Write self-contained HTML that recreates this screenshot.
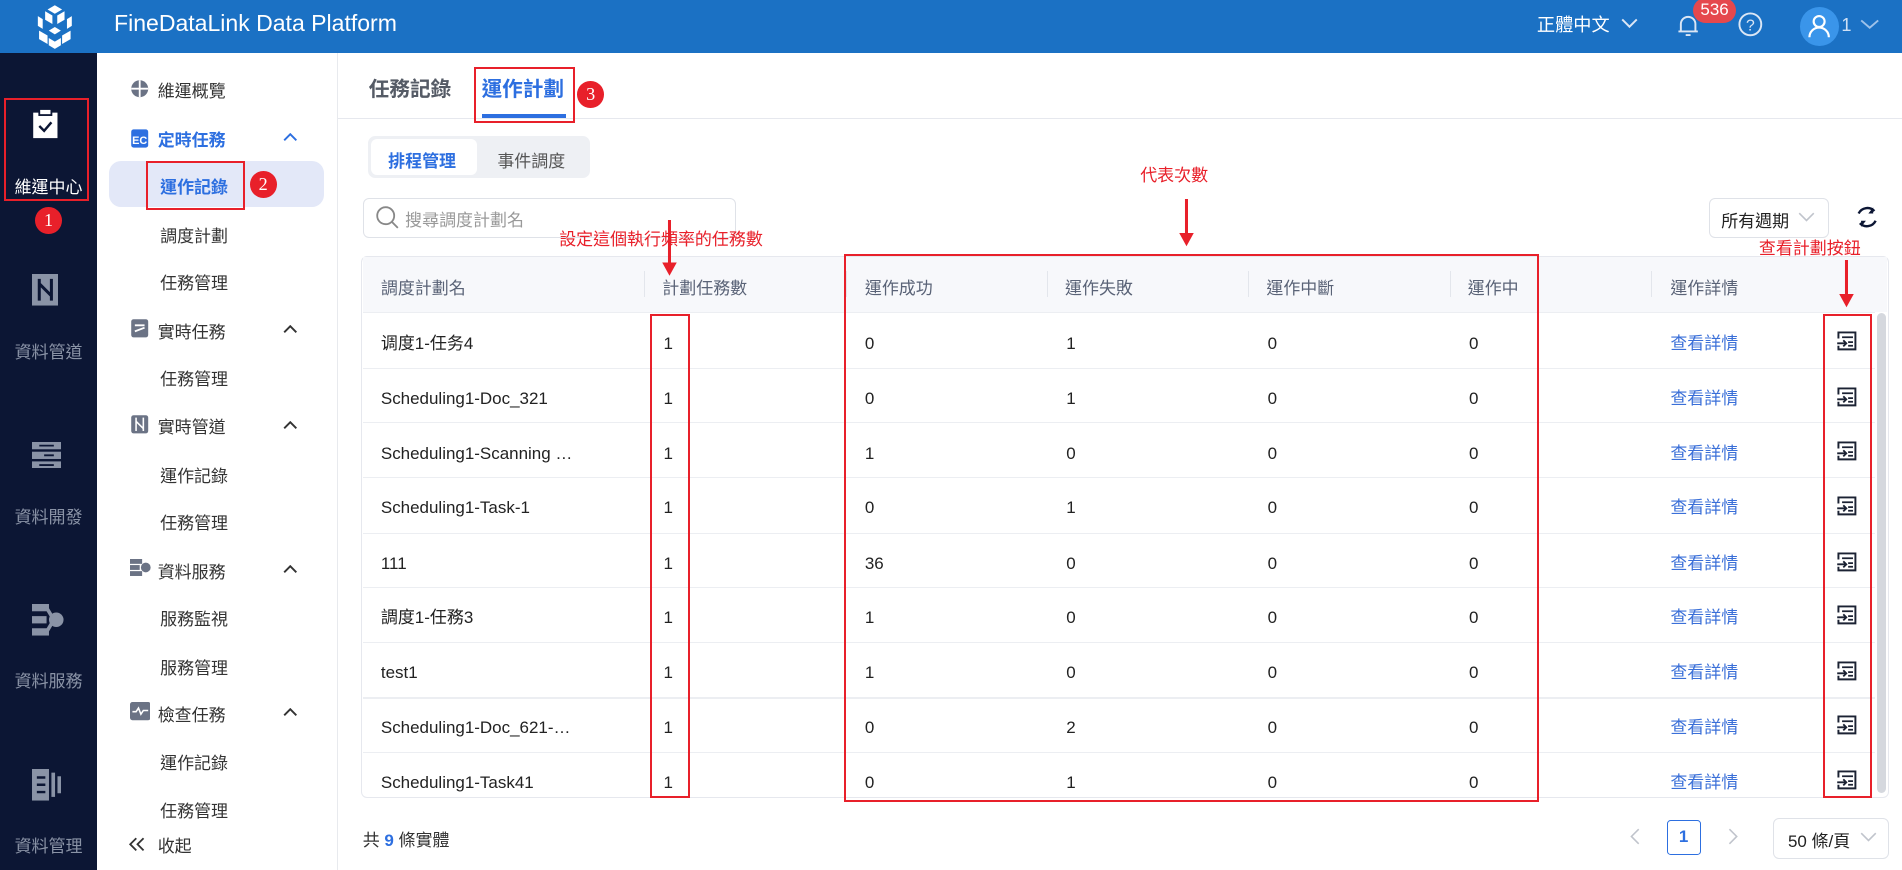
<!DOCTYPE html>
<html><head><meta charset="utf-8"><style>
html,body{margin:0;padding:0;}
body{width:1568px;height:717px;zoom:1.21301;overflow:hidden;position:relative;background:#fff;font-family:"Liberation Sans","Noto Sans CJK TC",sans-serif;color:#333;}
.a{position:absolute;white-space:nowrap;line-height:26px;}
.hdr{left:0;top:0;width:1568px;height:44px;background:#1b71c4;}
.side{left:0;top:44px;width:80px;height:673px;background:#0c1634;}
.sl{color:#8a93a6;font-size:14px;width:80px;text-align:center;}
.nav{left:81px;top:44px;width:197px;height:673px;background:#fff;border-right:1px solid #e8eaee;}
.ni{font-size:14px;color:#333;}
.red{border:2px solid #e8202a;box-sizing:border-box;}
.circ{width:22px;height:22px;border-radius:50%;background:#e8202a;color:#fff;font-family:"Liberation Serif",serif;font-size:15px;text-align:center;line-height:22px;}
.th{font-size:14px;color:#5a6377;top:225px;}
.td{font-size:14px;color:#222;}
.lk{font-size:14px;color:#3a6fd8;}
.rt{color:#e8202a;font-size:14px;}
.sep{width:1px;height:22px;background:#e3e6ec;top:223px;}
.rl{left:299px;width:1247px;height:1px;background:#eceef2;}
</style></head><body>
<div class="a hdr"></div>
<svg class="a" style="left:27px;top:3px" width="36" height="38" viewBox="0 0 36 38"><g fill="#fff"><path d="M18 1l6 3.5-6 3.5-6-3.5z"/><path d="M10 6l6 3.5v7l-6-3.5z"/><path d="M26 6l-6 3.5v7l6-3.5z"/><path d="M4 10l4 2.5v8L4 18z"/><path d="M32 10l-4 2.5v8l4-2.5z"/><path d="M5 22l7 4v7l-7-4z"/><path d="M31 22l-7 4v7l7-4z"/><path d="M18 19l5 3-5 3-5-3z"/><path d="M13 28l5 3 5-3v6l-5 3-5-3z"/></g></svg>
<div class="a" style="left:94px;top:7px;color:#fff;font-size:19px">FineDataLink Data Platform</div>
<div class="a" style="left:1267px;top:8px;color:#fff;font-size:15px">正體中文</div>
<svg class="a" style="left:1336px;top:14px" width="14" height="10"><path d="M1 2l6 6 6-6" stroke="#dbe6f5" stroke-width="1.6" fill="none"/></svg>
<svg class="a" style="left:1382px;top:10px" width="20" height="22"><path d="M4 16V10a6 6 0 0 1 12 0v6h2H2zM8 19h4" stroke="#dbe6f5" stroke-width="1.6" fill="none"/></svg>
<div class="a" style="left:1396px;top:-2px;width:35px;height:21px;border-radius:11px;background:#e5484d;color:#fff;font-size:14px;text-align:center;line-height:20px">536</div>
<svg class="a" style="left:1432px;top:9px" width="22" height="22"><circle cx="11" cy="11" r="9" stroke="#dbe6f5" stroke-width="1.6" fill="none"/><text x="11" y="16" font-size="13" fill="#dbe6f5" text-anchor="middle" font-family="Liberation Sans">?</text></svg>
<div class="a" style="left:1484px;top:6px;width:32px;height:32px;border-radius:50%;background:#3a95ea"></div>
<svg class="a" style="left:1490px;top:11px" width="20" height="22"><circle cx="10" cy="7" r="4.5" stroke="#fff" stroke-width="1.8" fill="none"/><path d="M2 20a8 8 0 0 1 16 0" stroke="#fff" stroke-width="1.8" fill="none"/></svg>
<div class="a" style="left:1518px;top:8px;color:#cfe0f5;font-size:15px">1</div>
<svg class="a" style="left:1533px;top:15px" width="16" height="10"><path d="M1 2l7 6 7-6" stroke="#9ec2ea" stroke-width="1.6" fill="none"/></svg>

<div class="a side"></div>
<svg class="a" style="left:26px;top:90px" width="22" height="25"><rect x="1" y="3" width="20" height="21" fill="#fff"/><rect x="6" y="0" width="10" height="5" fill="#fff" stroke="#0c1634" stroke-width="1.5"/><path d="M6 14l4 4 6-7" stroke="#0c1634" stroke-width="2" fill="none"/></svg>
<div class="a sl" style="left:0;top:142px;color:#fff">維運中心</div>
<svg class="a" style="left:26px;top:226px" width="22" height="26"><rect x="0" y="0" width="22" height="26" fill="#8a93a6"/><path d="M6 4v18M16 4v18M6 8l10 10" stroke="#0c1634" stroke-width="2.5"/></svg>
<div class="a sl" style="left:0;top:278px">資料管道</div>
<svg class="a" style="left:26px;top:364px" width="24" height="22"><rect x="0" y="0" width="24" height="6" fill="#8a93a6"/><rect x="0" y="8" width="24" height="6" fill="#8a93a6"/><rect x="0" y="16" width="24" height="6" fill="#8a93a6"/><path d="M6 3h12M10 11h8M6 19h12" stroke="#0c1634" stroke-width="1.5"/></svg>
<div class="a sl" style="left:0;top:414px">資料開發</div>
<svg class="a" style="left:26px;top:498px" width="28" height="26"><rect x="0" y="0" width="14" height="6" fill="#8a93a6"/><rect x="0" y="10" width="12" height="6" fill="#8a93a6"/><rect x="0" y="20" width="14" height="6" fill="#8a93a6"/><circle cx="20" cy="13" r="6" fill="#8a93a6"/><path d="M12 3l6 10-6 10" stroke="#8a93a6" stroke-width="3" fill="none"/></svg>
<div class="a sl" style="left:0;top:549px">資料服務</div>
<svg class="a" style="left:26px;top:634px" width="24" height="26"><rect x="0" y="0" width="14" height="26" fill="#8a93a6"/><path d="M4 7h7M4 13h7M4 19h7" stroke="#0c1634" stroke-width="2"/><rect x="16" y="3" width="3" height="20" fill="#8a93a6"/><rect x="21" y="6" width="3" height="14" fill="#8a93a6"/></svg>
<div class="a sl" style="left:0;top:685px">資料管理</div>

<div class="a nav"></div>
<div class="a" style="left:90px;top:133px;width:177px;height:38px;border-radius:10px;background:#e3e8f8"></div>
<svg class="a" style="left:107px;top:65px" width="16" height="16"><circle cx="8" cy="8" r="7" fill="#6b7385"/><path d="M8 1v14M1 8h14" stroke="#fff" stroke-width="1.5"/></svg>
<div class="a ni" style="left:130px;top:63px">維運概覽</div>
<svg class="a" style="left:107px;top:105px" width="16" height="17"><rect x="1" y="2" width="14" height="15" rx="2" fill="#2d6fe0"/><text x="8" y="14" font-size="9" fill="#fff" text-anchor="middle" font-family="Liberation Sans" font-weight="bold">EC</text></svg>
<div class="a ni" style="left:130px;top:103px;color:#2d6fe0;font-weight:bold">定時任務</div>
<div class="a ni" style="left:132px;top:142px;color:#2d6fe0;font-weight:bold">運作記錄</div>
<div class="a ni" style="left:132px;top:182px">調度計劃</div>
<div class="a ni" style="left:132px;top:221px">任務管理</div>
<svg class="a" style="left:107px;top:262px" width="16" height="17"><rect x="1" y="1" width="14" height="15" rx="2" fill="#6b7385"/><path d="M4 6h8M4 11l8-3" stroke="#fff" stroke-width="1.5"/></svg>
<div class="a ni" style="left:130px;top:261px">實時任務</div>
<div class="a ni" style="left:132px;top:300px">任務管理</div>
<svg class="a" style="left:107px;top:341px" width="16" height="17"><rect x="1" y="1" width="14" height="15" rx="2" fill="#6b7385"/><path d="M5 3v11M11 3v11M5 6l6 6" stroke="#fff" stroke-width="1.3"/></svg>
<div class="a ni" style="left:130px;top:340px">實時管道</div>
<div class="a ni" style="left:132px;top:380px">運作記錄</div>
<div class="a ni" style="left:132px;top:419px">任務管理</div>
<svg class="a" style="left:107px;top:461px" width="18" height="14"><rect x="0" y="0" width="10" height="4" fill="#6b7385"/><rect x="0" y="5" width="8" height="4" fill="#6b7385"/><rect x="0" y="10" width="10" height="4" fill="#6b7385"/><circle cx="13" cy="7" r="4" fill="#6b7385"/></svg>
<div class="a ni" style="left:130px;top:459px">資料服務</div>
<div class="a ni" style="left:132px;top:498px">服務監視</div>
<div class="a ni" style="left:132px;top:538px">服務管理</div>
<svg class="a" style="left:107px;top:579px" width="17" height="15"><rect x="0" y="0" width="17" height="15" rx="2" fill="#6b7385"/><path d="M2 8h3l2-3 2 5 2-3h4" stroke="#fff" stroke-width="1.3" fill="none"/></svg>
<div class="a ni" style="left:130px;top:577px">檢查任務</div>
<div class="a ni" style="left:132px;top:617px">運作記錄</div>
<div class="a ni" style="left:132px;top:656px">任務管理</div>
<svg class="a" style="left:106px;top:690px" width="14" height="12"><path d="M6 1L1 6l5 5M12 1L7 6l5 5" stroke="#333" stroke-width="1.5" fill="none"/></svg>
<div class="a ni" style="left:130px;top:685px">收起</div>
<svg class="a" style="left:233px;top:110px" width="12" height="8"><path d="M1 6l5-5 5 5" stroke="#2d6fe0" stroke-width="1.6" fill="none"/></svg>
<svg class="a" style="left:233px;top:268px" width="12" height="8"><path d="M1 6l5-5 5 5" stroke="#333" stroke-width="1.6" fill="none"/></svg>
<svg class="a" style="left:233px;top:347px" width="12" height="8"><path d="M1 6l5-5 5 5" stroke="#333" stroke-width="1.6" fill="none"/></svg>
<svg class="a" style="left:233px;top:466px" width="12" height="8"><path d="M1 6l5-5 5 5" stroke="#333" stroke-width="1.6" fill="none"/></svg>
<svg class="a" style="left:233px;top:584px" width="12" height="8"><path d="M1 6l5-5 5 5" stroke="#333" stroke-width="1.6" fill="none"/></svg>

<!-- main -->
<div class="a" style="left:279px;top:97px;width:1289px;height:1px;background:#e6e8ee"></div>
<div class="a" style="left:304px;top:61px;font-size:17px;font-weight:bold;color:#555b66">任務記錄</div>
<div class="a" style="left:397px;top:61px;font-size:17px;font-weight:bold;color:#2d6fe0">運作計劃</div>
<div class="a" style="left:397px;top:94px;width:70px;height:3px;background:#2d6fe0"></div>
<div class="a" style="left:303px;top:112px;width:183px;height:35px;border-radius:6px;background:#eef0f4"></div>
<div class="a" style="left:306px;top:115px;width:87px;height:29px;border-radius:5px;background:#fff"></div>
<div class="a" style="left:320px;top:120px;font-size:14px;font-weight:bold;color:#2d6fe0">排程管理</div>
<div class="a" style="left:410px;top:120px;font-size:14px;color:#555">事件調度</div>
<div class="a" style="left:299px;top:163px;width:308px;height:33px;border:1px solid #dfe2e8;border-radius:5px;box-sizing:border-box"></div>
<svg class="a" style="left:310px;top:170px" width="20" height="20"><circle cx="8" cy="8" r="7" stroke="#888" stroke-width="1.5" fill="none"/><path d="M13 13l5 5" stroke="#888" stroke-width="1.5"/></svg>
<div class="a" style="left:334px;top:169px;font-size:14px;color:#999">搜尋調度計劃名</div>
<div class="a" style="left:1409px;top:163px;width:99px;height:33px;border:1px solid #dfe2e8;border-radius:5px;box-sizing:border-box"></div>
<div class="a" style="left:1419px;top:170px;font-size:14px;color:#222">所有週期</div>
<svg class="a" style="left:1482px;top:175px" width="14" height="9"><path d="M1 1l6 6 6-6" stroke="#c0c4cc" stroke-width="1.3" fill="none"/></svg>
<svg class="a" style="left:1529px;top:169px" width="20" height="20"><path d="M16 5A8 8 0 0 0 3 7M4 15a8 8 0 0 0 13-2" stroke="#0c1634" stroke-width="2" fill="none"/><path d="M15 2v5h-4z" fill="#0c1634"/><path d="M5 18v-5h4z" fill="#0c1634"/></svg>

<!-- table -->
<div class="a" style="left:298px;top:211px;width:1259px;height:447px;border:1px solid #e6e8ee;border-radius:5px;box-sizing:border-box"></div>
<div class="a" style="left:299px;top:212px;width:1257px;height:45px;background:#f7f8fb"></div>
<div class="a" style="left:1547px;top:258px;width:8px;height:396px;border-radius:4px;background:#d5d8de"></div>
<div class="a sep" style="left:531px"></div><div class="a sep" style="left:697px"></div><div class="a sep" style="left:863px"></div><div class="a sep" style="left:1029px"></div><div class="a sep" style="left:1195px"></div><div class="a sep" style="left:1361px"></div>
<div class="a th" style="left:314px">調度計劃名</div>
<div class="a th" style="left:546px">計劃任務數</div>
<div class="a th" style="left:713px">運作成功</div>
<div class="a th" style="left:878px">運作失敗</div>
<div class="a th" style="left:1044px">運作中斷</div>
<div class="a th" style="left:1210px">運作中</div>
<div class="a th" style="left:1377px">運作詳情</div>
<div class="a rl" style="top:257px"></div><div class="a rl" style="top:303px"></div><div class="a rl" style="top:348px"></div><div class="a rl" style="top:393px"></div><div class="a rl" style="top:439px"></div><div class="a rl" style="top:484px"></div><div class="a rl" style="top:529px"></div><div class="a rl" style="top:575px"></div><div class="a rl" style="top:620px"></div>

<div id="rows"></div>
<script>
var d=[["调度1-任务4","0","1"],["Scheduling1-Doc_321","0","1"],["Scheduling1-Scanning …","1","0"],["Scheduling1-Task-1","0","1"],["111","36","0"],["調度1-任務3","1","0"],["test1","1","0"],["Scheduling1-Doc_621-…","0","2"],["Scheduling1-Task41","0","1"]];
var ys=[280,326,371,416,462,506,552,597,642],h="";
var ic='<svg width="18" height="18" viewBox="0 0 18 18"><path d="M2 7V2h14v14H2v-3" stroke="#1b2233" stroke-width="1.6" fill="none"/><path d="M5 6h9M10 10h4M10 13h4" stroke="#1b2233" stroke-width="1.4"/><path d="M1 11h7M6 8.5l2.5 2.5L6 13.5" stroke="#1b2233" stroke-width="1.5" fill="none"/></svg>';
for(var i=0;i<9;i++){var y=ys[i]-10;
h+='<div class="a td" style="left:314px;top:'+y+'px">'+d[i][0]+'</div>';
h+='<div class="a td" style="left:547px;top:'+y+'px">1</div>';
h+='<div class="a td" style="left:713px;top:'+y+'px">'+d[i][1]+'</div>';
h+='<div class="a td" style="left:879px;top:'+y+'px">'+d[i][2]+'</div>';
h+='<div class="a td" style="left:1045px;top:'+y+'px">0</div>';
h+='<div class="a td" style="left:1211px;top:'+y+'px">0</div>';
h+='<div class="a lk" style="left:1377px;top:'+y+'px">查看詳情</div>';
h+='<div class="a" style="left:1514px;top:'+(y+2)+'px;line-height:18px">'+ic+'</div>';}
document.getElementById('rows').innerHTML=h;
</script>

<div class="a" style="left:299px;top:680px;font-size:14px;color:#333">共 <b style="color:#2d6fe0">9</b> 條實體</div>
<svg class="a" style="left:1343px;top:683px" width="10" height="14"><path d="M8 1L2 7l6 6" stroke="#c0c4cc" stroke-width="1.3" fill="none"/></svg>
<div class="a" style="left:1374px;top:676px;width:28px;height:29px;border:1px solid #2d6fe0;border-radius:3px;box-sizing:border-box;text-align:center;line-height:27px;font-size:14px;font-weight:bold;color:#2d6fe0">1</div>
<svg class="a" style="left:1424px;top:683px" width="10" height="14"><path d="M2 1l6 6-6 6" stroke="#c0c4cc" stroke-width="1.3" fill="none"/></svg>
<div class="a" style="left:1462px;top:674px;width:95px;height:34px;border:1px solid #dfe2e8;border-radius:5px;box-sizing:border-box"></div>
<div class="a" style="left:1474px;top:681px;font-size:14px;color:#222">50 條/頁</div>
<svg class="a" style="left:1533px;top:686px" width="14" height="9"><path d="M1 1l6 6 6-6" stroke="#c0c4cc" stroke-width="1.3" fill="none"/></svg>

<!-- annotations -->
<div class="a red" style="left:3px;top:81px;width:70px;height:85px"></div>
<div class="a circ" style="left:29px;top:171px">1</div>
<div class="a red" style="left:120px;top:133px;width:82px;height:40px"></div>
<div class="a circ" style="left:206px;top:141px">2</div>
<div class="a red" style="left:391px;top:55px;width:83px;height:46px"></div>
<div class="a circ" style="left:476px;top:67px">3</div>
<div class="a red" style="left:536px;top:259px;width:33px;height:399px"></div>
<div class="a red" style="left:696px;top:209px;width:573px;height:452px"></div>
<div class="a red" style="left:1503px;top:259px;width:40px;height:399px"></div>
<div class="a rt" style="left:940px;top:132px">代表次數</div>
<div class="a rt" style="left:461px;top:185px">設定這個執行頻率的任務數</div>
<div class="a rt" style="left:1450px;top:192px">查看計劃按鈕</div>
<svg class="a" style="left:971px;top:164px" width="14" height="40"><path d="M7 0v30" stroke="#e8202a" stroke-width="2.5"/><path d="M1 28h12L7 39z" fill="#e8202a"/></svg>
<svg class="a" style="left:545px;top:181px" width="14" height="47"><path d="M7 0v37" stroke="#e8202a" stroke-width="2.5"/><path d="M1 35h12L7 46z" fill="#e8202a"/></svg>
<svg class="a" style="left:1515px;top:214px" width="14" height="40"><path d="M7 0v30" stroke="#e8202a" stroke-width="2.5"/><path d="M1 28h12L7 39z" fill="#e8202a"/></svg>
</body></html>
